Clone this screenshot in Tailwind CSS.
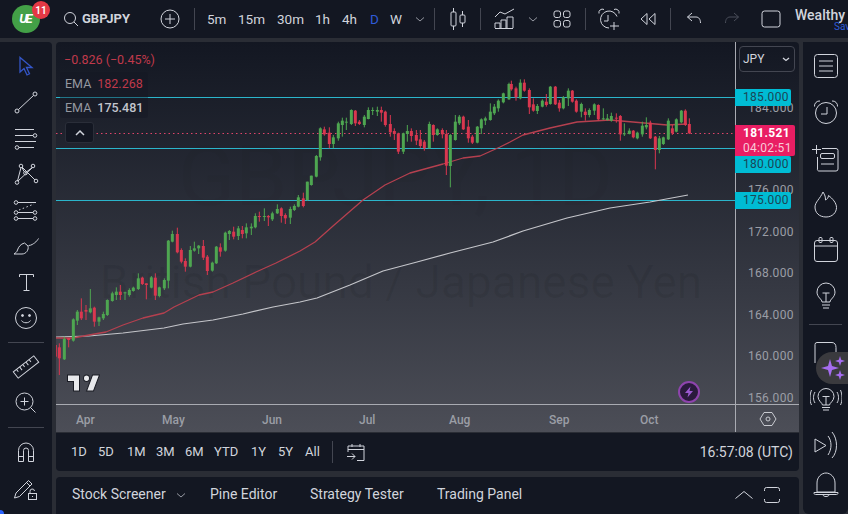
<!DOCTYPE html>
<html lang="en">
<head>
<meta charset="UTF-8" />
<title>GBPJPY chart</title>
<script src="https://cdn.jsdelivr.net/npm/@tailwindcss/browser@4"></script>
</head>
<body class="bg-[#2a2d35]">
<div class="relative w-[848px] h-[514px] overflow-hidden flex flex-col font-[family-name:Roboto,sans-serif] text-[#d1d4dc] bg-[#2a2d35]">

  <!-- TOP BAR -->
  <header class="h-[38px] shrink-0 bg-[#131722] flex items-center text-[13.500px]">
    <div class="relative w-[56px] h-[38px] shrink-0">
      <div class="absolute left-[12px] top-[5px] w-[28px] h-[28px] rounded-full bg-[#43a047] flex items-center justify-center text-white font-bold italic text-[13px] tracking-[-2px] pr-[2px]">UE</div>
      <div class="absolute left-[32px] top-[1px] w-[18px] h-[18px] rounded-full bg-[#e53945] flex items-center justify-center text-white text-[10px] font-semibold">11</div>
    </div>
    <svg class="w-[16px] h-[16px] ml-[7px] fill-none stroke-[#d1d4dc]" viewBox="0 0 16 16"><circle cx="7" cy="7" r="5.500"/><path d="M11 11l4 4"/></svg>
    <span class="ml-[3px] w-[56px] font-bold text-[13px] text-[#d1d4dc]">GBPJPY</span>
    <svg class="w-[20px] h-[20px] ml-[22px] fill-none stroke-[#d1d4dc]" viewBox="0 0 20 20"><circle cx="10" cy="10" r="9"/><path d="M10 5v10M5 10h10"/></svg>
    <div class="w-px h-[22px] bg-[#434651] ml-[14px]"></div>
    <span class="ml-[12px] w-[19px]">5m</span>
    <span class="ml-[12px] w-[27px]">15m</span>
    <span class="ml-[12px] w-[26px]">30m</span>
    <span class="ml-[12px] w-[15px]">1h</span>
    <span class="ml-[12px] w-[16px]">4h</span>
    <span class="ml-[12px] w-[9px] text-[#2f5bd8]">D</span>
    <span class="ml-[11px] w-[14px]">W</span>
    <svg class="w-[10px] h-[10px] ml-[11px] fill-none stroke-[#9598a1]" viewBox="0 0 10 10"><path d="M1 3.500l4 3.500 4-3.500"/></svg>
    <div class="w-px h-[22px] bg-[#434651] ml-[9px]"></div>
    <svg class="w-[20px] h-[24px] ml-[13px] fill-none stroke-[#d1d4dc]" viewBox="0 0 20 24"><path d="M5.500 1v4M5.500 19v4M14.500 4v4M14.500 16v4"/><rect x="3" y="5" width="5" height="14" rx="1"/><rect x="12" y="8" width="5" height="8" rx="1"/></svg>
    <div class="w-px h-[22px] bg-[#434651] ml-[12px]"></div>
    <svg class="w-[20px] h-[20px] ml-[15px] fill-none stroke-[#d1d4dc] overflow-visible" viewBox="0 0 20 20"><path d="M-1 8l5-5 5 2 9-5M-1 19v-5h5v5M5 19v-8h5v8M11 19V8h6v11M-1 19.500h18"/></svg>
    <svg class="w-[10px] h-[10px] ml-[12px] fill-none stroke-[#9598a1]" viewBox="0 0 10 10"><path d="M1 3.500l4 3.500 4-3.500"/></svg>
    <svg class="w-[18px] h-[18px] ml-[15px] fill-none stroke-[#d1d4dc]" viewBox="0 0 18 18"><rect x="1" y="1" width="6.500" height="6.500" rx="2"/><rect x="10.500" y="1" width="6.500" height="6.500" rx="2"/><rect x="1" y="10.500" width="6.500" height="6.500" rx="2"/><rect x="10.500" y="10.500" width="6.500" height="6.500" rx="2"/></svg>
    <div class="w-px h-[22px] bg-[#434651] ml-[14px]"></div>
    <svg class="w-[22px] h-[22px] ml-[12px] fill-none stroke-[#d1d4dc]" viewBox="0 0 22 22"><path d="M11 20a8.500 8.500 0 1 1 8-11.500M10 7v6H6M1 5.500A3.500 3.500 0 0 1 6 1.500M21 5.500A3.500 3.500 0 0 0 16 1.500M16 14v8M12 18h9"/></svg>
    <svg class="w-[16px] h-[14px] ml-[20px] fill-none stroke-[#d1d4dc]" viewBox="0 0 16 14"><path d="M7 1.500L1 7l6 5.500zM15 1.500L9 7l6 5.500z"/></svg>
    <div class="w-px h-[22px] bg-[#434651] ml-[14px]"></div>
    <svg class="w-[16px] h-[14px] ml-[15px] fill-none stroke-[#d1d4dc]" viewBox="0 0 16 14"><path d="M6 1L1.500 5 6 9M1.500 5H10c3 0 4.500 2.500 4.500 6"/></svg>
    <svg class="w-[16px] h-[14px] ml-[22px] fill-none stroke-[#4a4e5a]" viewBox="0 0 16 14"><path d="M10 1l4.500 4L10 9M14.500 5H6c-3 0-4.500 2.500-4.500 6"/></svg>
    <svg class="w-[20px] h-[18px] ml-[21px] fill-none stroke-[#d1d4dc]" viewBox="0 0 20 18"><rect x="1" y="1" width="18" height="16" rx="2.500"/></svg>
    <div class="ml-[14px] flex flex-col w-[53px] shrink-0 leading-none">
      <span class="text-[14px] font-medium whitespace-nowrap mt-[1px]">Wealthy</span>
      <span class="text-[10px] text-[#2f5bd8] pl-[39px]">Save</span>
    </div>
  </header>

  <!-- MAIN ROW -->
  <div class="flex-1 flex mt-[4px] min-h-0">

    <!-- LEFT TOOLS -->
    <aside class="w-[52px] shrink-0 bg-[#131722] rounded-tr-[4px] flex flex-col items-center pt-[6px]">
      <div class="h-[36px] flex items-center"><svg class="w-[28px] h-[28px] fill-none stroke-[#3456c8]" stroke-width="1.300" viewBox="0 0 28 28"><path d="M8 5.500v14.500l4-3.500 3 6.500 2.500-1.200-3-6.300h5.500z"/></svg></div>
      <div class="h-[36px] flex items-center"><svg class="w-[28px] h-[28px] fill-none stroke-[#d1d4dc]" viewBox="0 0 28 28"><path d="M6.500 21.500L21.500 7.500"/><circle cx="5" cy="23" r="2"/><circle cx="23" cy="6" r="2"/></svg></div>
      <div class="h-[36px] flex items-center"><svg class="w-[28px] h-[28px] fill-none stroke-[#d1d4dc]" viewBox="0 0 28 28"><path d="M3 5.500h19M3 11.500h18M3 17.500h21M7 23.500h15"/><circle cx="23" cy="11.500" r="1.800"/><circle cx="5" cy="23.500" r="1.800"/></svg></div>
      <div class="h-[36px] flex items-center"><svg class="w-[28px] h-[28px] fill-none stroke-[#d1d4dc]" viewBox="0 0 28 28"><path d="M5.500 21L9 7.500M10 7l13 13M13 13L21 7M10 7.500l2 4M20 8L6 21"/><circle cx="9" cy="6" r="1.800"/><circle cx="21" cy="6" r="1.800"/><circle cx="5" cy="22.500" r="1.800"/><circle cx="24" cy="21" r="1.800"/><circle cx="13.500" cy="13" r="1.800"/></svg></div>
      <div class="h-[36px] flex items-center"><svg class="w-[28px] h-[28px] fill-none stroke-[#d1d4dc]" viewBox="0 0 28 28"><path d="M6 6.500h18M6 16.500h15M6 22.500h15"/><path d="M7 14l15-6" stroke-dasharray="1.500 2.500"/><circle cx="4" cy="6.500" r="1.800"/><circle cx="4" cy="16.500" r="1.800"/><circle cx="23" cy="16.500" r="1.800"/><circle cx="4" cy="22.500" r="1.800"/><circle cx="23" cy="22.500" r="1.800"/></svg></div>
      <div class="h-[36px] flex items-center"><svg class="w-[28px] h-[28px] fill-none stroke-[#d1d4dc]" viewBox="0 0 28 28"><path d="M2 22h8c4 0 7-4 6-8l-3.500-3c-4 1-6 4-7 7-.5 2-2 3-3.500 4z"/><path d="M16.500 13.500c3 0 5-2 6-2.500 2-1.500 3-3 4-4.500"/></svg></div>
      <div class="h-[36px] flex items-center"><svg class="w-[28px] h-[28px] fill-none stroke-[#d1d4dc]" viewBox="0 0 28 28"><path d="M7.500 9V6.500h14V9M14.500 6.500v16M11.500 22.500h6"/></svg></div>
      <div class="h-[36px] flex items-center"><svg class="w-[28px] h-[28px] fill-none stroke-[#d1d4dc]" viewBox="0 0 28 28"><circle cx="14" cy="14" r="10.500"/><circle cx="10.500" cy="11.500" r="1" class="fill-[#d1d4dc]"/><circle cx="17.500" cy="11.500" r="1" class="fill-[#d1d4dc]"/><path d="M9.500 16.500c1.500 3 7.500 3 9 0"/></svg></div>
      <div class="w-[36px] h-px bg-[#434651] my-[6px]"></div>
      <div class="h-[36px] flex items-center"><svg class="w-[28px] h-[28px] fill-none stroke-[#d1d4dc]" viewBox="0 0 28 28"><g transform="rotate(-38 14 14)"><rect x="1" y="10" width="26" height="8"/><path d="M5 10v3M9 10v4M13 10v3M17 10v4M21 10v3"/></g></svg></div>
      <div class="h-[36px] flex items-center"><svg class="w-[28px] h-[28px] fill-none stroke-[#d1d4dc]" viewBox="0 0 28 28"><circle cx="12.500" cy="12.500" r="8.500"/><path d="M8.500 12.500h8M12.500 8.500v8M18.500 18.500l5 5"/></svg></div>
      <div class="w-[36px] h-px bg-[#434651] my-[6px]"></div>
      <div class="h-[36px] flex items-center"><svg class="w-[28px] h-[28px] fill-none stroke-[#d1d4dc]" viewBox="0 0 28 28"><path d="M6.500 23.500v-11a7.500 7.500 0 0 1 15 0v11h-5v-11a2.500 2.500 0 0 0-5 0v11zM6.500 18.500h5M16.500 18.500h5"/></svg></div>
      <div class="h-[36px] flex items-center"><svg class="w-[28px] h-[28px] fill-none stroke-[#d1d4dc]" viewBox="0 0 28 28"><path d="M4 19l-1.500 5 5-1.500L20 10l-3.500-3.500zM14.500 8.500l3.500 3.500"/><rect x="16.500" y="19.500" width="8" height="6"/><path d="M18 19.500v-2a2.200 2.200 0 0 1 4.500-.5M20.500 22v1"/></svg></div>
    </aside>

    <!-- CENTER -->
    <div class="w-[743px] shrink-0 ml-[4px] flex flex-col">

      <!-- CHART -->
      <section class="relative h-[390px] shrink-0 rounded-t-[4px] overflow-hidden bg-linear-to-b from-[#131722] to-[#4c4e57]">
        <!-- watermark -->
        <div class="absolute left-0 w-[679px] top-[90px] text-center text-[84px] leading-[90px] text-black/[0.025] whitespace-nowrap">GBPJPY, 1D</div>
        <div class="absolute left-[44px] top-[214px] text-[46px] leading-[52px] text-black/[0.06] whitespace-nowrap">British Pound / Japanese Yen</div>

        <svg id="plot" class="absolute left-0 top-0 w-[679px] h-[362px]" viewBox="56 42 679 362" fill="none">
          <path d="M56 97.500H735M56 148.500H735M56 200.500H735" stroke="#2bb5cb"/>
          <path d="M56 133.500H735" stroke="#e0456a" stroke-dasharray="1.500 3"/>
          <polyline stroke="#c4c5ca" stroke-width="1.200" stroke-linejoin="round" points="56,337 89,336 123,333 164,328 183,324 213,320 243,314 273,307 300,302 317,298 350,285 383,271 417,262 450,253 493,242 523,231 567,218 610,208 650,202 688,195"/>
          <polyline stroke="#b5404f" stroke-width="1.300" stroke-linejoin="round" points="56,338 73,338 89,335 106,332 123,325 143,318 164,313 174,307 199,295 213,292 233,283 256,272 276,263 300,251 315,242 333,226 363,200 385,185 410,173 443,164 463,158 480,156 500,147 510,142 523,135 550,128 577,122 610,120 633,122 667,125 687,124"/>
        </svg>

        <!-- legend -->
        <div class="absolute left-[8px] top-[9px] text-[12.500px] text-[#c0394b]">−0.826 (−0.45%)</div>
        <div class="absolute left-[4px] top-[30px] w-[88px] h-[46px] bg-[#131722]/40 rounded-[3px]"></div>
        <div class="absolute left-[9px] top-[33px] text-[12.500px] flex gap-[6px]"><span class="text-[#9598a1]">EMA</span><span class="text-[#c0394b]">182.268</span></div>
        <div class="absolute left-[9px] top-[57px] text-[12.500px] flex gap-[6px]"><span class="text-[#9598a1]">EMA</span><span class="text-[#c3c6ce] font-medium">175.481</span></div>
        <button class="absolute left-[9px] top-[80px] w-[29px] h-[21px] rounded-[3px] border border-[#2a2e39] bg-[#131722] flex items-center justify-center">
          <svg class="w-[10px] h-[8px] fill-none stroke-[#d1d4dc]" stroke-width="1.500" viewBox="0 0 10 8"><path d="M1 6l4-4 4 4"/></svg>
        </button>

        <!-- tv logo -->
        <svg class="absolute left-[11px] top-[332px] w-[33px] h-[18px]" viewBox="1.500 5 33 17" preserveAspectRatio="none"><path d="M14 6H2v6h6v9h6V6zm14 15h-7l6-15h7l-6 15zm-7-9a3 3 0 1 0 0-6 3 3 0 0 0 0 6z" fill="#e8e9ec" stroke="#1a1c24" stroke-width="1"/></svg>

        <!-- bolt -->
        <div class="absolute left-[622px] top-[339px] w-[22px] h-[22px] rounded-full bg-[#2a1a3c] border-2 border-[#8e44ad] flex items-center justify-center">
          <svg class="w-[12px] h-[12px] fill-[#9b59d0]" viewBox="0 0 12 12"><path d="M7.500 0.500L2 7h3.500l-1 4.500L10 5H6.500z"/></svg>
        </div>

        <!-- price axis -->
        <div class="absolute left-[679px] top-0 bottom-0 w-px bg-[#a9abb2]"></div>
        <div class="absolute left-[683px] top-[4px] w-[56px] h-[26px] rounded-[4px] border border-[#434651] flex items-center justify-between pl-[3px] pr-[4px] text-[12px]">JPY
          <svg class="w-[8px] h-[8px] fill-none stroke-[#d1d4dc]" stroke-width="1.300" viewBox="0 0 8 8"><path d="M1 3l3 2.500L7 3"/></svg>
        </div>
        <div class="absolute left-[692px] top-[57px] text-[12px] text-[#9b9ea6] tracking-[0.3px]">184.000</div>
        <div class="absolute left-[692px] top-[139px] text-[12px] text-[#9b9ea6] tracking-[0.3px]">176.000</div>
        <div class="absolute left-[692px] top-[181px] text-[12px] text-[#9b9ea6] tracking-[0.3px]">172.000</div>
        <div class="absolute left-[692px] top-[222px] text-[12px] text-[#9b9ea6] tracking-[0.3px]">168.000</div>
        <div class="absolute left-[692px] top-[264px] text-[12px] text-[#9b9ea6] tracking-[0.3px]">164.000</div>
        <div class="absolute left-[692px] top-[305px] text-[12px] text-[#9b9ea6] tracking-[0.3px]">160.000</div>
        <div class="absolute left-[692px] top-[347px] text-[12px] text-[#9b9ea6] tracking-[0.3px]">156.000</div>
        <div class="absolute left-[679px] top-[47px] w-[56px] h-[17px] rounded-r-[2px] bg-[#00bcd4] text-[#1b4656] text-[12px] leading-[17px] pl-[8px] tracking-[0.3px]">185.000</div>
        <div class="absolute left-[679px] top-[114px] w-[56px] h-[17px] rounded-r-[2px] bg-[#00bcd4] text-[#1b4656] text-[12px] leading-[17px] pl-[8px] tracking-[0.3px]">180.000</div>
        <div class="absolute left-[679px] top-[150px] w-[56px] h-[17px] rounded-r-[2px] bg-[#00bcd4] text-[#1b4656] text-[12px] leading-[17px] pl-[8px] tracking-[0.3px]">175.000</div>
        <div class="absolute left-[679px] top-[83px] w-[60px] h-[31px] rounded-r-[2px] bg-[#e91e63] text-white text-[12px] leading-[15px] pl-[8px] pt-[1px] tracking-[0.3px]"><div class="font-bold">181.521</div><div class="text-[#f8c9d8]">04:02:51</div></div>

        <!-- time axis -->
        <div class="absolute left-0 right-0 top-[362px] h-px bg-[#a9abb2]"></div>
        <div class="absolute left-[20px] top-[369px] text-[12px] font-medium text-[#9b9ea6]">Apr</div>
        <div class="absolute left-[106px] top-[369px] text-[12px] font-medium text-[#9b9ea6]">May</div>
        <div class="absolute left-[206px] top-[369px] text-[12px] font-medium text-[#9b9ea6]">Jun</div>
        <div class="absolute left-[303px] top-[369px] text-[12px] font-medium text-[#9b9ea6]">Jul</div>
        <div class="absolute left-[393px] top-[369px] text-[12px] font-medium text-[#9b9ea6]">Aug</div>
        <div class="absolute left-[493px] top-[369px] text-[12px] font-medium text-[#9b9ea6]">Sep</div>
        <div class="absolute left-[584px] top-[369px] text-[12px] font-medium text-[#9b9ea6]">Oct</div>
        <svg class="absolute left-[703px] top-[368px] w-[18px] h-[18px] fill-none stroke-[#c8cad0]" viewBox="0 0 18 18"><path d="M5 2.500h8L17 9l-4 6.500H5L1 9z"/><circle cx="9" cy="9" r="2"/></svg>
      </section>

      <!-- RANGE BAR -->
      <div class="h-[38px] shrink-0 mt-px bg-[#131722] rounded-b-[4px] flex items-center pl-[15px] pr-[6px] text-[13px]">
        <span class="w-[15px]">1D</span>
        <span class="ml-[12px] w-[16px]">5D</span>
        <span class="ml-[13px] w-[17px]">1M</span>
        <span class="ml-[12px] w-[17px]">3M</span>
        <span class="ml-[12px] w-[17px]">6M</span>
        <span class="ml-[12px] w-[25px]">YTD</span>
        <span class="ml-[12px] w-[15px]">1Y</span>
        <span class="ml-[12px] w-[15px]">5Y</span>
        <span class="ml-[12px] w-[17px]">All</span>
        <div class="w-px h-[22px] bg-[#434651] ml-[10px]"></div>
        <svg class="w-[20px] h-[20px] ml-[13px] fill-none stroke-[#d1d4dc]" viewBox="0 0 20 20"><path d="M2 10V4h16v14.500H11M2 7.500h16M6 2v3M14 2v3M1 14.500h8M6 11.500l3 3-3 3"/></svg>
        <span class="ml-auto text-[14px] whitespace-nowrap">16:57:08 (UTC)</span>
      </div>

      <!-- BOTTOM BAR -->
      <div class="h-[38px] shrink-0 mt-[6px] bg-[#131722] rounded-t-[4px] flex items-center pl-[16px] pb-[3px] text-[14px]">
        <span class="w-[93px] whitespace-nowrap">Stock Screener</span>
        <svg class="w-[10px] h-[10px] ml-[11px] fill-none stroke-[#9598a1]" viewBox="0 0 10 10"><path d="M1 3.500l4 3.500 4-3.500"/></svg>
        <span class="ml-[24px] w-[69px] whitespace-nowrap">Pine Editor</span>
        <span class="ml-[31px] w-[95px] whitespace-nowrap">Strategy Tester</span>
        <span class="ml-[32px] w-[84px] whitespace-nowrap">Trading Panel</span>
        <svg class="w-[18px] h-[10px] ml-[214px] fill-none stroke-[#d1d4dc]" viewBox="0 0 18 10"><path d="M0.500 8.500L9 1.500l8.500 7"/></svg>
        <svg class="w-[16px] h-[16px] ml-[11px] fill-none stroke-[#d1d4dc]" viewBox="0 0 16 16"><path d="M0.500 4V2.500a2 2 0 0 1 2-2h11a2 2 0 0 1 2 2V4M0.500 12v1.500a2 2 0 0 0 2 2h11a2 2 0 0 0 2-2V12"/></svg>
      </div>
    </div>

    <!-- RIGHT TOOLS -->
    <aside class="w-[45px] shrink-0 ml-[4px] bg-[#131722] rounded-b-[6px] flex flex-col items-center">
      <div class="h-[46px] mt-px flex items-center"><svg class="w-[28px] h-[28px] fill-none stroke-[#d1d4dc]" viewBox="0 0 28 28"><rect x="2.500" y="2.500" width="23" height="23" rx="3"/><path d="M7 9h14M7 14h14M7 19h14"/></svg></div>
      <div class="h-[46px] flex items-center"><svg class="w-[28px] h-[28px] fill-none stroke-[#d1d4dc]" viewBox="0 0 28 28"><circle cx="14" cy="15" r="10.500"/><path d="M15 9v7H9M2.500 8.500A5 5 0 0 1 8 3M25.500 8.500A5 5 0 0 0 20 3"/></svg></div>
      <div class="h-[46px] flex items-center"><svg class="w-[28px] h-[28px] fill-none stroke-[#d1d4dc]" viewBox="0 0 28 28"><path d="M0 5.500h9M4.500 1v9M10 4.500h14a2 2 0 0 1 2 2V25a2 2 0 0 1-2 2H7a1.500 1.500 0 0 1-1.500-2V13"/><rect x="8.500" y="9.500" width="14" height="5" rx="1.500"/><path d="M9 20h13"/></svg></div>
      <div class="h-[46px] flex items-center"><svg class="w-[28px] h-[28px] fill-none stroke-[#d1d4dc]" viewBox="0 0 28 28"><path d="M14 27C7 27 3 22.500 3 17c0-5 5-8 8-15 2 3 2.500 5 2.500 8 1.500-.5 3-2.500 3-4.500 4 3 8 7.500 8 12 0 5-4 9.500-10.500 9.500z"/></svg></div>
      <div class="h-[46px] flex items-center"><svg class="w-[28px] h-[28px] fill-none stroke-[#d1d4dc]" viewBox="0 0 28 28"><rect x="2.500" y="4.500" width="23" height="21" rx="2.500"/><path d="M2.500 10h23"/><rect x="7" y="1.500" width="3" height="5" rx="1"/><rect x="18" y="1.500" width="3" height="5" rx="1"/></svg></div>
      <div class="h-[46px] flex items-center"><svg class="w-[28px] h-[28px] fill-none stroke-[#d1d4dc]" viewBox="0 0 28 28"><path d="M10 20c0-3-5-4.500-5-10a9 9 0 0 1 18 0c0 5.500-5 7-5 10zM10 23h8M11 26h6M10.500 11h7M14 11v9"/></svg></div>
      <div class="w-[33px] h-px bg-[#434651] my-[5px]"></div>
      <div class="h-[46px] flex items-center"><svg class="w-[28px] h-[28px] fill-none stroke-[#d1d4dc]" viewBox="0 0 28 28"><path d="M3 24V5.500a2 2 0 0 1 2-2h15c2.500 0 4 2 4 5V26"/></svg></div>
      <div class="h-[46px] flex items-center"><svg class="w-[32px] h-[28px] fill-none stroke-[#d1d4dc]" viewBox="0 0 32 28"><path d="M12.500 20c0-2-4.500-4-4.500-8.500a8 8 0 0 1 16 0c0 4.500-4.500 6.500-4.500 8.500zM12 22.500h8M13 25h6M12.500 11.500h7M16 11.500v8.500M5 7c-2 3.500-2 8 0 11M1.500 5c-2 5-2 11 0 15M27 7c2 3.500 2 8 0 11M30.500 5c2 5 2 11 0 15"/></svg></div>
      <div class="h-[46px] flex items-center"><svg class="w-[28px] h-[28px] fill-none stroke-[#d1d4dc]" viewBox="0 0 28 28"><path d="M3 8v13l11-6.500zM16 5c4 5 4 13 0 19M20 1c6 7 6 20 0 26"/></svg></div>
      <div class="h-[40px] -mt-[3px] flex items-center"><svg class="w-[28px] h-[28px] fill-none stroke-[#d1d4dc]" viewBox="0 0 28 28"><path d="M5 21v-9c0-6 4.500-10 9-10s9 4 9 10v9zM2 21.500h24M2 21.500a1.500 1.500 0 0 0 1.500 2h21a1.500 1.500 0 0 0 1.500-2M11 24c.5 2 5.500 2 6 0"/></svg></div>
    </aside>
  </div>

  <!-- sparkle pill over right rail -->
  <div class="absolute left-[816px] top-[352px] w-[40px] h-[32px] rounded-l-full bg-[#3a3a3e] flex items-center pl-[5px]">
    <svg class="w-[24px] h-[24px] fill-[#a56cf0]" viewBox="0 0 24 24"><path d="M9 3l2 7 7 2-7 2-2 7-2-7-7-2 7-2zM19 0l1.200 3.800L24 5l-3.800 1.200L19 10l-1.200-3.800L14 5l3.800-1.200zM19 14l1.200 3.800L24 19l-3.800 1.200L19 24l-1.200-3.800L14 19l3.800-1.200z"/></svg>
  </div>
  <div class="absolute left-0 bottom-0 w-[4px] h-[4px] rounded-tr-full bg-[#2962ff]"></div>
</div>

<script>
  // candles as [x, wickTop, bodyTop, bodyBottom, wickBottom], read off the chart at 3x
  var G = "#4ea651", R = "#d9374f";
  var plot = document.getElementById("plot");
  function draw(ox, oy, rows) {
    rows.forEach(function (c) {
      var col = c[0] ? G : R, x = ox + c[1] / 3;
      var w = document.createElementNS("http://www.w3.org/2000/svg", "rect");
      w.setAttribute("x", x - 0.5); w.setAttribute("y", oy + c[2] / 3);
      w.setAttribute("width", 1); w.setAttribute("height", (c[5] - c[2]) / 3);
      w.setAttribute("fill", col); plot.appendChild(w);
      var b = document.createElementNS("http://www.w3.org/2000/svg", "rect");
      b.setAttribute("x", x - 1.5); b.setAttribute("y", oy + c[3] / 3);
      b.setAttribute("width", 3); b.setAttribute("height", Math.max(1, (c[4] - c[3]) / 3));
      b.setAttribute("fill", col); plot.appendChild(b);
    });
  }
  draw(56, 110, [
    [0,-2,700,705,740,760],[0,10,700,712,745,795],[1,25,680,687,748,750],[0,38,684,684,690,712],[1,52,625,628,692,695],
    [1,64,600,605,632,645],[0,76,565,605,625,630],[0,90,585,600,605,630],[1,103,537,595,607,610],[0,115,590,593,635,650],
    [1,129,620,622,635,648],[1,142,605,612,625,630],[1,154,568,570,615,618],[1,169,545,550,573,575],[1,181,532,545,555,570],
    [0,193,525,545,555,570],[1,207,545,547,550,570],[1,220,535,540,555,560],[1,232,530,533,543,545],[1,247,490,505,537,540],
    [0,259,500,503,522,525],[0,271,520,520,525,568],[1,286,498,502,533,535],[0,298,490,503,557,570],[1,310,530,532,558,562],
    [1,325,505,510,535,540],[1,337,390,392,512,535],[1,349,362,372,395,397],[0,364,353,372,427,430],[0,376,415,420,455,460],
    [0,388,445,453,470,485],[1,403,408,420,470,472],[1,415,395,415,422,425],[1,428,405,407,415,432],[0,442,390,408,443,450],
    [0,454,435,440,483,495],[1,469,455,458,482,485],[1,481,408,410,460,462],[0,493,400,412,425,440],[1,508,365,368,422,425],
    [1,520,360,363,372,390],[0,533,350,365,380,388],[1,547,348,355,378,390],[0,559,348,360,372,385],[1,571,340,352,370,385],
    [1,586,340,350,355,375],[1,598,310,318,352,355],[0,610,305,318,320,335],[1,625,295,318,320,333],[0,637,315,318,322,348],
    [1,649,305,310,328,333],[1,664,283,297,310,312],[0,676,292,295,318,338],[0,688,310,315,325,342],[1,703,290,297,323,342],
    [1,715,283,288,300,303],[1,727,255,262,290,292],[0,742,248,265,288,292]
  ]);
  draw(300, 70, [
    [1,22,335,335,390,392],[1,34,317,317,345,347],[1,49,255,258,320,322],[1,61,172,175,262,272],[0,73,170,178,193,197],
    [0,88,172,188,222,235],[1,100,195,202,222,235],[1,115,155,160,205,212],[1,127,143,152,165,200],[1,139,143,155,157,180],
    [1,154,118,120,162,165],[0,166,120,122,160,168],[0,178,150,155,162,165],[1,193,135,140,165,172],[1,205,112,120,147,148],
    [1,218,112,120,122,135],[1,232,110,120,125,138],[0,244,110,120,128,155],[0,256,122,125,165,170],[0,271,135,162,187,200],
    [0,283,175,183,192,210],[0,295,188,190,245,252],[1,310,188,190,245,252],[1,322,165,183,192,215],[0,334,175,183,198,215],
    [0,349,180,195,212,225],[0,361,180,208,228,235],[0,373,210,215,235,242],[1,388,155,162,235,235],[0,400,163,165,195,215],
    [1,412,175,178,195,197],[0,427,175,180,193,205],[0,439,180,192,287,315],[1,451,192,195,288,352],[1,466,135,155,210,212],
    [1,478,135,140,160,165],[0,490,137,140,178,180],[0,505,150,170,205,218],[0,517,195,200,218,222],[1,532,168,170,218,220],
    [1,544,145,148,175,192],[1,556,140,145,152,165],[1,571,100,125,150,152],[1,583,102,110,130,135],[1,595,88,92,115,125],
    [1,610,68,70,97,100]
  ]);
  draw(510, 70, [
    [1,-3,38,42,88,90],[0,4,32,42,58,62],[0,18,50,55,82,92],[1,31,28,38,85,88],[0,43,28,38,62,65],[0,58,55,60,112,132],
    [0,70,85,103,122,125],[1,82,102,108,123,132],[1,97,88,92,110,112],[0,109,72,95,105,110],[1,121,48,50,102,104],
    [0,136,48,50,103,105],[0,148,90,98,115,125],[1,160,78,82,115,118],[1,175,55,62,85,108],[0,187,60,62,95,98],
    [0,199,88,92,125,128],[1,214,98,102,125,142],[0,226,115,125,135,152],[1,238,115,120,135,142],[1,253,100,103,122,135],
    [0,265,103,105,148,152],[1,280,115,145,148,150],[1,292,132,145,150,152],[1,304,128,138,152,155],[0,319,130,143,146,158],
    [0,331,135,138,193,212],[1,343,160,190,193,198],[1,358,175,182,192,193],[0,370,180,182,202,205],[1,382,185,188,205,208],
    [1,397,155,167,193,200],[1,409,142,165,172,178],[0,421,152,158,205,207],[0,436,198,200,240,298],[1,448,198,205,240,250],
    [1,460,200,202,222,225],[1,475,145,152,208,210],[0,487,165,175,190,195],[1,499,145,148,185,187],[1,514,120,122,157,160],
    [0,526,118,122,165,168],[0,538,145,162,190,192]
  ]);
</script>
</body>
</html>
